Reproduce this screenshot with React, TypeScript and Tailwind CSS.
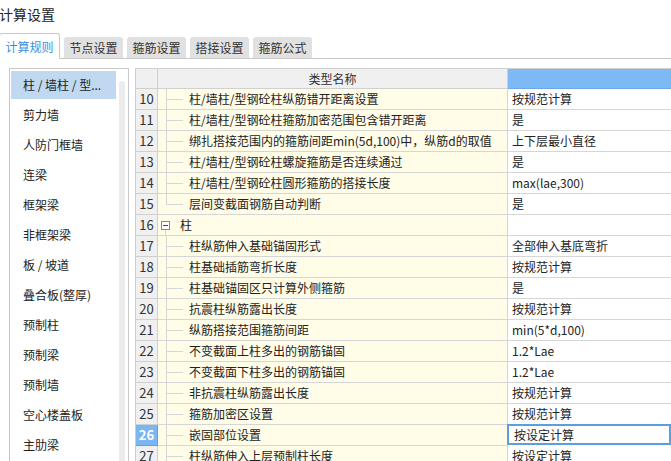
import React from "react";

type Row = { n: number; name: string; value: string; kind?: "parent" | "last" };

const rows: Row[] = [
  { n: 10, name: "柱/墙柱/型钢砼柱纵筋错开距离设置", value: "按规范计算" },
  { n: 11, name: "柱/墙柱/型钢砼柱箍筋加密范围包含错开距离", value: "是" },
  { n: 12, name: "绑扎搭接范围内的箍筋间距min(5d,100)中，纵筋d的取值", value: "上下层最小直径" },
  { n: 13, name: "柱/墙柱/型钢砼柱螺旋箍筋是否连续通过", value: "是" },
  { n: 14, name: "柱/墙柱/型钢砼柱圆形箍筋的搭接长度", value: "max(lae,300)" },
  { n: 15, name: "层间变截面钢筋自动判断", value: "是", kind: "last" },
  { n: 16, name: "柱", value: "", kind: "parent" },
  { n: 17, name: "柱纵筋伸入基础锚固形式", value: "全部伸入基底弯折" },
  { n: 18, name: "柱基础插筋弯折长度", value: "按规范计算" },
  { n: 19, name: "柱基础锚固区只计算外侧箍筋", value: "是" },
  { n: 20, name: "抗震柱纵筋露出长度", value: "按规范计算" },
  { n: 21, name: "纵筋搭接范围箍筋间距", value: "min(5*d,100)" },
  { n: 22, name: "不变截面上柱多出的钢筋锚固", value: "1.2*Lae" },
  { n: 23, name: "不变截面下柱多出的钢筋锚固", value: "1.2*Lae" },
  { n: 24, name: "非抗震柱纵筋露出长度", value: "按规范计算" },
  { n: 25, name: "箍筋加密区设置", value: "按规范计算" },
  { n: 26, name: "嵌固部位设置", value: "按设定计算" },
  { n: 27, name: "柱纵筋伸入上层预制柱长度", value: "按设定计算" },
];

const sideItems = [
  "柱 / 墙柱 / 型...",
  "剪力墙",
  "人防门框墙",
  "连梁",
  "框架梁",
  "非框架梁",
  "板 / 坡道",
  "叠合板(整厚)",
  "预制柱",
  "预制梁",
  "预制墙",
  "空心楼盖板",
  "主肋梁",
];

const tabs = ["节点设置", "箍筋设置", "搭接设置", "箍筋公式"];

function NameCell({ row }: { row: Row }) {
  if (row.kind === "parent") {
    return (
      <div className="relative h-full bg-[#fffce8]">
        <div className="absolute left-[3px] top-[6px] w-[9px] h-[9px] border border-[#8a8a8a] bg-white flex items-center justify-center">
          <div className="w-[5px] h-[1px] bg-[#444]" />
        </div>
        <div className="absolute left-[7px] top-[15px] bottom-[-1px] w-px bg-[#d6d6d6]" />
        <div className="pl-[22px] leading-[20px] text-[12px] text-[#222]">{row.name}</div>
      </div>
    );
  }
  return (
    <div className="relative h-full bg-[#fffce8]">
      <div
        className={
          row.kind === "last"
            ? "absolute left-[8px] top-[-1px] h-[11px] w-px bg-[#d6d6d6]"
            : "absolute left-[8px] top-[-1px] bottom-[-1px] w-px bg-[#d6d6d6]"
        }
      />
      <div className="absolute left-[8px] top-[10px] w-[17px] h-px bg-[#d6d6d6]" />
      <div className="pl-[31px] leading-[20px] text-[12px] text-[#222] whitespace-nowrap">{row.name}</div>
    </div>
  );
}

export default function App() {
  return (
    <div className="w-[671px] h-[461px] overflow-hidden bg-white font-['Noto_Sans_CJK_SC',sans-serif] text-[#222]">
      <div className="h-[28px] leading-[28px] text-[14px] pl-0 -ml-px">计算设置</div>

      <div className="mt-[6px] h-[25px] flex items-end gap-[4px] border-b border-[#c8c8c8]">
        <div className="h-[26px] -mb-px w-[61px] -ml-px bg-white border border-b-0 border-[#c8c8c8] rounded-t-[3px] flex items-center justify-center text-[12px] text-[#3b8ee0]">
          计算规则
        </div>
        {tabs.map((t) => (
          <div
            key={t}
            className="h-[21px] w-[59px] bg-[#e1e1e1] rounded-t-[3px] flex items-center justify-center text-[12px] text-[#333]"
          >
            {t}
          </div>
        ))}
      </div>

      <div className="mt-[9px] flex items-start">
        <div className="ml-[9px] w-[120px] h-[400px] border border-[#c9c9c9] flex">
          <div className="pl-px w-[106px] pt-px flex flex-col">
            {sideItems.map((s, i) => (
              <div key={s} className="h-[30px] flex items-center">
                <div
                  className={
                    i === 0
                      ? "w-[105px] h-[28px] bg-[#c1d9f0] flex items-center pl-[12px] text-[12px] text-[#222] whitespace-nowrap"
                      : "w-[105px] h-[28px] flex items-center pl-[12px] text-[12px] text-[#222] whitespace-nowrap"
                  }
                >
                  {s}
                </div>
              </div>
            ))}
          </div>
          <div className="ml-[3px] mt-[12px] w-[6px] h-[400px] bg-[#ececec] rounded-[3px]" />
        </div>

        <div className="ml-[6px] flex-1 border-l border-t border-[#cfcfcf] grid grid-cols-[22px_350px_1fr]">
          <div className="h-[20px] bg-[#f0f0f0] border-r border-b border-[#d0d0d0]" />
          <div className="h-[20px] bg-[#f0f0f0] border-r border-b border-[#d0d0d0] flex items-center justify-center text-[12px] text-[#333]">
            类型名称
          </div>
          <div className="h-[20px] bg-[#7cb9f5] border-b border-[#6aa8e8]" />

          {rows.map((r) => {
            const sel = r.n === 26;
            return (
              <React.Fragment key={r.n}>
                <div
                  className={
                    sel
                      ? "h-[21px] bg-[#7ab6f2] border-r border-b border-[#5f9fe2] flex items-center justify-center text-[13px] font-bold text-white"
                      : "h-[21px] bg-[#f0f0f0] border-r border-b border-[#d0d0d0] flex items-center justify-center text-[13px] text-[#333]"
                  }
                >
                  {r.n}
                </div>
                <div className="h-[21px] border-r border-b border-[#d6d6d6]">
                  <NameCell row={r} />
                </div>
                <div
                  className={
                    sel
                      ? "h-[21px] bg-white border-2 border-[#5b9fe2] -mt-px -ml-px pl-[5px] flex items-center text-[12px] text-[#222]"
                      : "h-[21px] bg-white border-b border-[#d6d6d6] pl-[4px] flex items-center text-[12px] text-[#222]"
                  }
                >
                  {r.value}
                </div>
              </React.Fragment>
            );
          })}
        </div>
      </div>
    </div>
  );
}
